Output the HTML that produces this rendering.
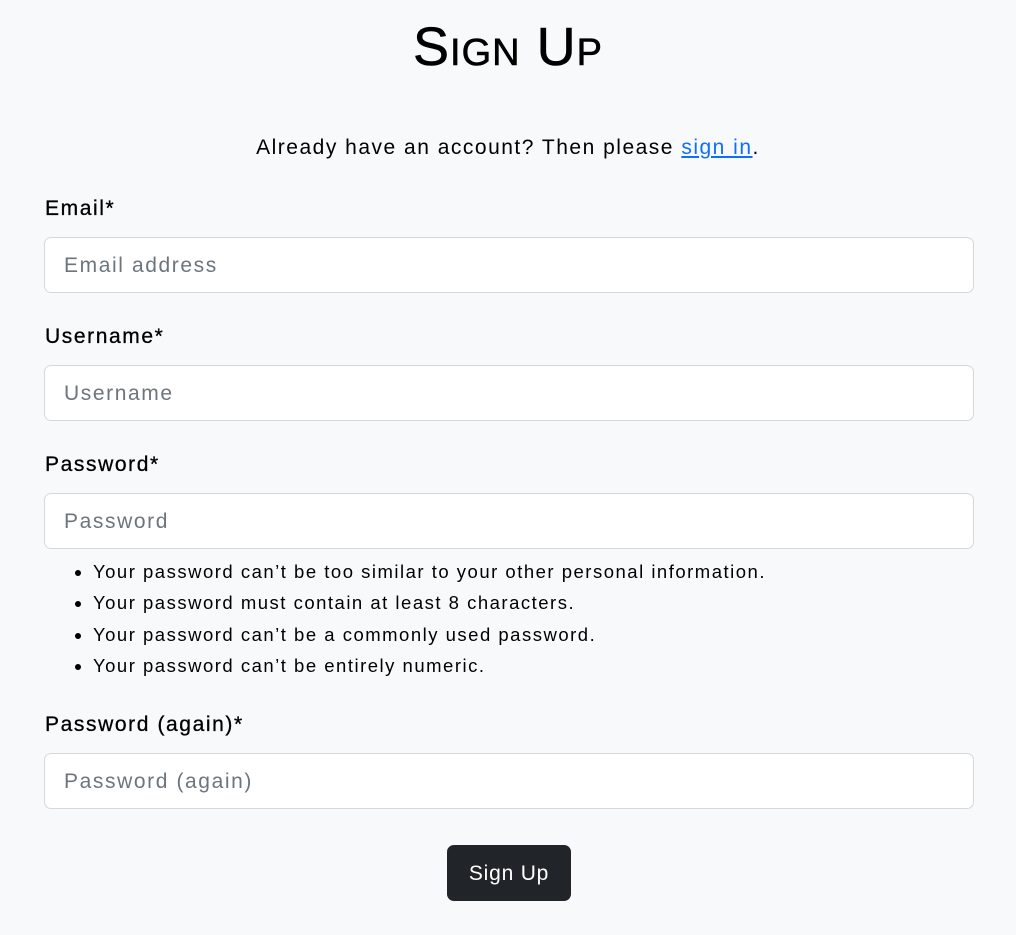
<!DOCTYPE html>
<html><head><style>
body{margin:0;background:#f8f9fa;font-family:"Liberation Sans",sans-serif;color:#000;width:1016px;height:935px;position:relative;overflow:hidden}
.a{position:absolute;white-space:nowrap}
h1{position:absolute;left:0;width:1016px;top:15px;margin:0;text-align:center;font-size:54px;font-weight:normal;font-variant:small-caps;line-height:64px;letter-spacing:1px;-webkit-text-stroke:0.6px #000}
.lab{position:absolute;left:45px;font-size:21px;line-height:26px;top:0;letter-spacing:1.6px;-webkit-text-stroke:0.3px #000}
.in{position:absolute;left:44px;width:928px;height:54px;border:1px solid #d6d9dc;border-radius:7px;background:#fff}
.in span{position:absolute;left:19px;top:15px;font-size:21px;color:#6c757d;line-height:26px;letter-spacing:1.6px}
ul{position:absolute;left:55px;top:556px;margin:0;padding-left:38px;font-size:18.5px;line-height:31.3px;letter-spacing:1.5px}
.btn{position:absolute;left:447px;top:845px;width:124px;height:56px;background:#212529;border-radius:7px;color:#fff;font-size:21px;text-align:center;line-height:57px;letter-spacing:0.8px}
</style></head><body>
<h1>Sign Up</h1>
<div class="a" style="left:0;width:1016px;text-align:center;top:134px;font-size:21px;line-height:28px;letter-spacing:1.5px">Already have an account? Then please <span style="color:#0d6efd;text-decoration:underline">sign in</span>.</div>
<div class="lab" style="top:196px">Email*</div>
<div class="in" style="top:237px"><span>Email address</span></div>
<div class="lab" style="top:324px">Username*</div>
<div class="in" style="top:365px"><span>Username</span></div>
<div class="lab" style="top:452px">Password*</div>
<div class="in" style="top:493px"><span>Password</span></div>
<ul>
<li>Your password can’t be too similar to your other personal information.</li>
<li>Your password must contain at least 8 characters.</li>
<li>Your password can’t be a commonly used password.</li>
<li>Your password can’t be entirely numeric.</li>
</ul>
<div class="lab" style="top:712px">Password (again)*</div>
<div class="in" style="top:753px"><span>Password (again)</span></div>
<div class="btn">Sign Up</div>
</body></html>
